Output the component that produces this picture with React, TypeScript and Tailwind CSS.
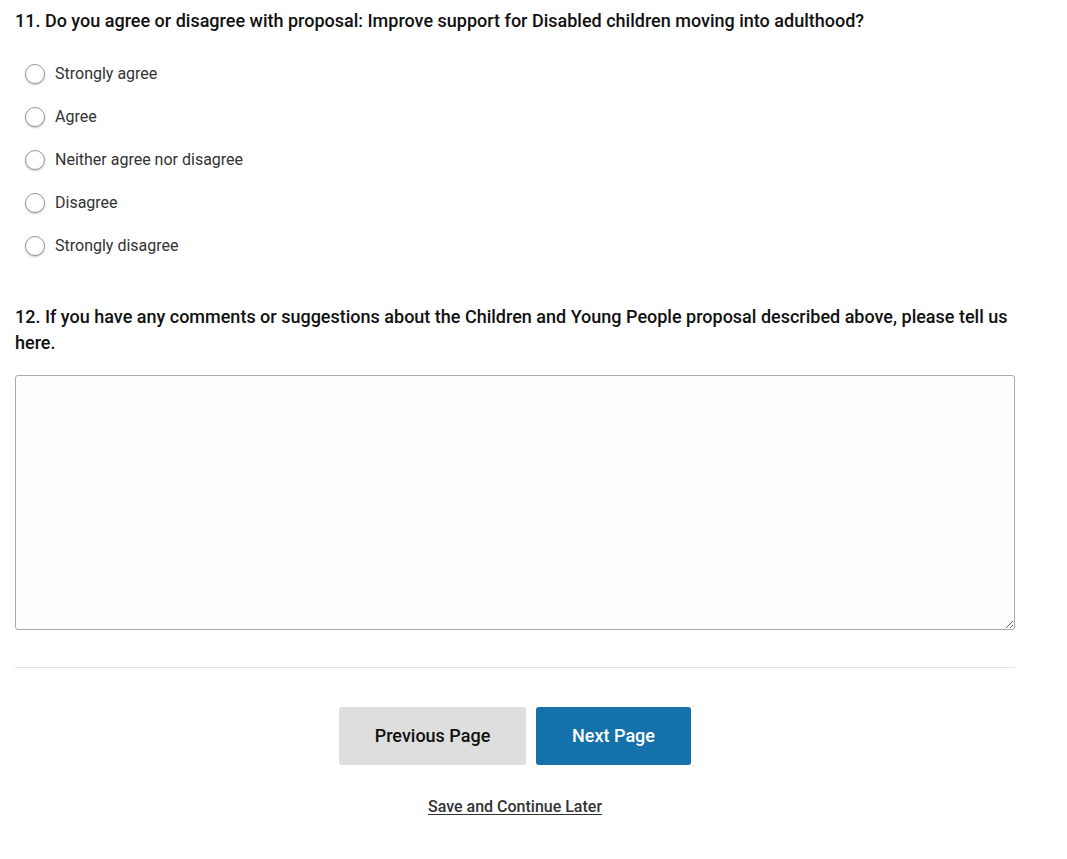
import React from "react";

const options = ["Strongly agree", "Agree", "Neither agree nor disagree", "Disagree", "Strongly disagree"];

export default function App() {
  return (
    <div className="bg-white min-h-[859px] w-[1067px] text-[#222]" style={{ fontFamily: "Roboto, 'Liberation Sans', sans-serif" }}>
      <div className="w-[1000px] ml-[15px] pt-[8px]">
        <h2 className="text-[18px] leading-[26px] font-medium text-[#111]">
          11. Do you agree or disagree with proposal: Improve support for Disabled children moving into adulthood?
        </h2>
        <div className="mt-[18px] flex flex-col">
          {options.map((o) => (
            <label key={o} className="flex items-center h-[43px] pl-[10px] cursor-pointer">
              <span className="w-[20px] h-[20px] rounded-full border border-[#9a9a9a] bg-white shadow-[0_1px_2px_rgba(0,0,0,0.25)] shrink-0" />
              <span className="ml-[10px] text-[16px] text-[#333]">{o}</span>
            </label>
          ))}
        </div>
        <h2 className="mt-[37px] text-[18px] leading-[26px] font-medium text-[#111]">
          12. If you have any comments or suggestions about the Children and Young People proposal described above, please tell us here.
        </h2>
        <textarea className="block mt-[19px] w-[1000px] h-[255px] border border-[#a9a9a9] rounded-[3px] bg-[#fdfdfd] resize-y outline-none" />
        <div className="mt-[37px] border-t border-[#e3e3e3]" />
        <div className="mt-[39px] flex justify-center gap-[10px]">
          <button className="w-[187px] h-[58px] pb-[2px] rounded-[3px] bg-[#dedede] text-[#111] text-[18px] font-medium">Previous Page</button>
          <button className="w-[155px] h-[58px] pb-[2px] rounded-[3px] bg-[#1471a9] text-white text-[18px] font-medium">Next Page</button>
        </div>
        <div className="mt-[30px] flex justify-center">
          <a href="#" className="text-[16px] font-medium text-[#333] underline underline-offset-2">Save and Continue Later</a>
        </div>
      </div>
    </div>
  );
}
